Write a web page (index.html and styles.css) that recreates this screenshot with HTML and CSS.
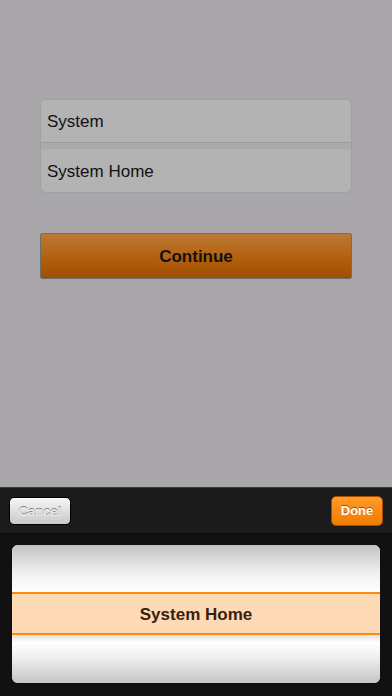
FILE: index.html
```html
<!DOCTYPE html>
<html>
<head>
<meta charset="utf-8">
<link rel="stylesheet" href="styles.css">
</head>
<body>
<div class="screen">
  <div class="content">
    <div class="fields">
      <div class="field">System</div>
      <div class="sep"></div>
      <div class="field">System Home</div>
    </div>
    <div class="continue">Continue</div>
  </div>
  <div class="sheet">
    <div class="toolbar">
      <div class="btn cancel">Cancel</div>
      <div class="btn done">Done</div>
    </div>
    <div class="pickerwrap">
      <div class="picker">
        <div class="ptop"></div>
        <div class="psel">System Home</div>
        <div class="pbot"></div>
      </div>
    </div>
  </div>
</div>
</body>
</html>
```
FILE: styles.css
```css
html, body { margin: 0; padding: 0; }
body { font-family: "Liberation Sans", Arial, sans-serif; }
.screen { width: 392px; height: 696px; background: #a9a7aa; display: flex; flex-direction: column; overflow: hidden; }
.content { flex: 1; padding: 99px 40px 0 40px; }
.fields { border: 1px solid #a0a0a2; border-radius: 6px; background: #a6a6a8; overflow: hidden; }
.field { padding-top: 2px; box-sizing: border-box; height: 43px; background: #b3b3b3; font-size: 17px; color: #111; display: flex; align-items: center; padding-left: 6px; }
.field:first-child { border-bottom: 1px solid #9e9e9e; }
.sep { height: 6px; background: #aaaaab; }
.continue { margin-top: 40px; padding-top: 2px; box-sizing: border-box; height: 46px; border: 1px solid #6e6e6e; border-radius: 2px; background: linear-gradient(#bb7a35, #b25d0a 60%, #9c4f03); display: flex; align-items: center; justify-content: center; font-weight: bold; font-size: 17px; color: #111; }
.sheet { height: 209px; background: #111; display: flex; flex-direction: column; }
.toolbar { height: 45px; background: #1b1b1b; border-top: 1px solid #3a3a3a; border-bottom: 1px solid #080808; display: flex; align-items: center; justify-content: space-between; padding: 0 9px 0 9px; }
.btn { font-weight: bold; font-size: 13px; display: flex; align-items: center; justify-content: center; border-radius: 5px; }
.cancel { height: 28px; margin-top: 1px; background: linear-gradient(#f6f6f6, #c9c9c9); border: 1px solid #000; color: #e8e8e8; text-shadow: 0 -1px 0 #888; box-sizing: border-box; width: 62px; }
.done { width: 52px; height: 30px; background: linear-gradient(#ff9a2a, #f27a00); border: 1px solid #a84f00; color: #fff; text-shadow: 0 -1px 0 #a04e00; box-sizing: border-box; }
.pickerwrap { padding: 11px 12px 0 12px; }
.picker { height: 138px; border-radius: 6px; overflow: hidden; display: flex; flex-direction: column; background: #fff; }
.ptop { height: 47px; background: linear-gradient(#c3c3c3, #f0f0f0 60%, #fff); }
.psel { padding-top: 2px; height: 37px; border-top: 2px solid #ff8a10; border-bottom: 2px solid #ff8a10; background: #fdd9b6; display: flex; align-items: center; justify-content: center; font-weight: bold; font-size: 17px; color: #3a200c; }
.pbot { flex: 1; background: linear-gradient(#e0e0e0, #fff 15%, #f0f0f0 45%, #c6c6c6); }
```
